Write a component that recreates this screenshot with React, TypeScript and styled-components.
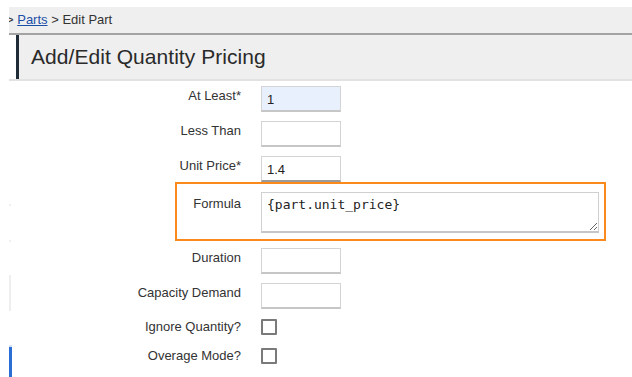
import styled, { createGlobalStyle } from "styled-components";

const GlobalStyle = createGlobalStyle`
  html, body {
    margin: 0;
    padding: 0;
    background: #ffffff;
  }
  body {
    font-family: "Liberation Sans", Arial, sans-serif;
    color: #333333;
    overflow: hidden;
  }
`;

const Page = styled.div`
  width: 632px;
  height: 377px;
  display: flex;
  flex-direction: column;
  padding-top: 7px;
  box-sizing: border-box;
  overflow: hidden;
`;

const Breadcrumb = styled.div`
  flex-shrink: 0;
  margin-left: 9px;
  height: 26px;
  line-height: 26px;
  background: #efefef;
  border-bottom: 2px solid #a3a3a3;
  font-size: 13px;
  color: #333333;
  white-space: nowrap;
  overflow: hidden;

  span {
    margin-left: -3px;
  }

  a {
    color: #1c4fa8;
    text-decoration: underline;
  }
`;

const TitleBar = styled.div`
  flex-shrink: 0;
  margin-left: 9px;
  height: 44px;
  display: flex;
  background: #ffffff;
  border-bottom: 2px solid #e2e2e2;
`;

const TitleInner = styled.div`
  flex: 1;
  margin-left: 7px;
  background: #efefef;
  border-left: 3px solid #1f2b37;
  display: flex;
  align-items: center;
  padding-left: 12px;
`;

const Title = styled.h1`
  margin: 0;
  font-size: 21px;
  font-weight: 400;
  color: #2a2a2a;
  letter-spacing: 0.05px;
`;

const Body = styled.div`
  flex: 1;
  min-height: 0;
  display: flex;
  overflow: hidden;
`;

const Rail = styled.div`
  width: 12px;
  flex-shrink: 0;
  display: flex;
  flex-direction: column;
  padding-left: 9px;
  box-sizing: border-box;
`;

const RailMark = styled.div<{ $top: number; $h: number; $w?: number; $color: string }>`
  flex-shrink: 0;
  margin-top: ${(p) => p.$top}px;
  height: ${(p) => p.$h}px;
  width: ${(p) => p.$w ?? 2}px;
  background: ${(p) => p.$color};
`;

const Form = styled.div`
  flex: 1;
  display: flex;
  flex-direction: column;
  padding-top: 5px;
`;

const Row = styled.div<{ $mt: number; $center?: boolean }>`
  flex-shrink: 0;
  margin-top: ${(p) => p.$mt}px;
  display: grid;
  grid-template-columns: 229px 1fr;
  column-gap: 20px;
  align-items: ${(p) => (p.$center ? "center" : "start")};
`;

const HighlightRow = styled.div<{ $mt: number }>`
  flex-shrink: 0;
  margin-top: ${(p) => p.$mt}px;
  margin-left: 163px;
  width: 431px;
  box-sizing: border-box;
  border: 2px solid #fb8a1e;
  display: grid;
  grid-template-columns: 64px 1fr;
  column-gap: 20px;
  padding: 8px 5px 6px 0;
`;

const Label = styled.label<{ $pt?: number }>`
  text-align: right;
  font-size: 13px;
  line-height: 16px;
  color: #333333;
  padding-top: ${(p) => p.$pt ?? 2}px;
  white-space: nowrap;
`;

const TextInput = styled.input<{ $filled?: boolean; $dark?: boolean }>`
  width: 80px;
  height: 26px;
  box-sizing: border-box;
  border: 1px solid #d4d4d4;
  border-bottom: 2px solid ${(p) => (p.$dark ? "#9a9a9a" : "#c6c6c6")};
  background: ${(p) => (p.$filled ? "#e8f0fe" : "#ffffff")};
  font-family: "Liberation Sans", Arial, sans-serif;
  font-size: 13px;
  color: #222222;
  padding: 2px 5px 0;
  outline: none;
`;

const FormulaArea = styled.textarea`
  width: 338px;
  height: 41px;
  box-sizing: border-box;
  border: 1px solid #d0d0d0;
  border-bottom: 2px solid #c6c6c6;
  font-family: "DejaVu Sans Mono", "Liberation Mono", monospace;
  font-size: 13px;
  line-height: 16px;
  color: #222222;
  padding: 4px 5px;
  outline: none;
  resize: both;
`;

const Checkbox = styled.span`
  display: block;
  width: 16px;
  height: 16px;
  box-sizing: border-box;
  border: 2px solid #7a7a7a;
  border-radius: 1px;
  background: #ffffff;
`;

export default function App() {
  return (
    <>
      <GlobalStyle />
      <Page>
        <Breadcrumb>
          <span>
            &gt; <a href="#">Parts</a> &gt; Edit Part
          </span>
        </Breadcrumb>
        <TitleBar>
          <TitleInner>
            <Title>Add/Edit Quantity Pricing</Title>
          </TitleInner>
        </TitleBar>
        <Body>
          <Rail>
            <RailMark $top={123} $h={2} $color="#f0f0f0" />
            <RailMark $top={34} $h={2} $color="#f0f0f0" />
            <RailMark $top={33} $h={36} $color="#eeeeee" />
            <RailMark $top={34} $h={2} $w={3} $color="#d8e4f6" />
            <RailMark $top={0} $h={40} $w={3} $color="#2a6ed6" />
          </Rail>
          <Form>
            <Row $mt={0}>
              <Label>At Least*</Label>
              <TextInput $filled defaultValue="1" />
            </Row>
            <Row $mt={9}>
              <Label>Less Than</Label>
              <TextInput />
            </Row>
            <Row $mt={9}>
              <Label>Unit Price*</Label>
              <TextInput $dark defaultValue="1.4" />
            </Row>
            <HighlightRow $mt={0}>
              <Label $pt={4}>Formula</Label>
              <FormulaArea defaultValue="{part.unit_price}" />
            </HighlightRow>
            <Row $mt={7}>
              <Label>Duration</Label>
              <TextInput />
            </Row>
            <Row $mt={9}>
              <Label>Capacity Demand</Label>
              <TextInput />
            </Row>
            <Row $mt={10} $center>
              <Label $pt={0}>Ignore Quantity?</Label>
              <Checkbox />
            </Row>
            <Row $mt={13} $center>
              <Label $pt={0}>Overage Mode?</Label>
              <Checkbox />
            </Row>
          </Form>
        </Body>
      </Page>
    </>
  );
}
